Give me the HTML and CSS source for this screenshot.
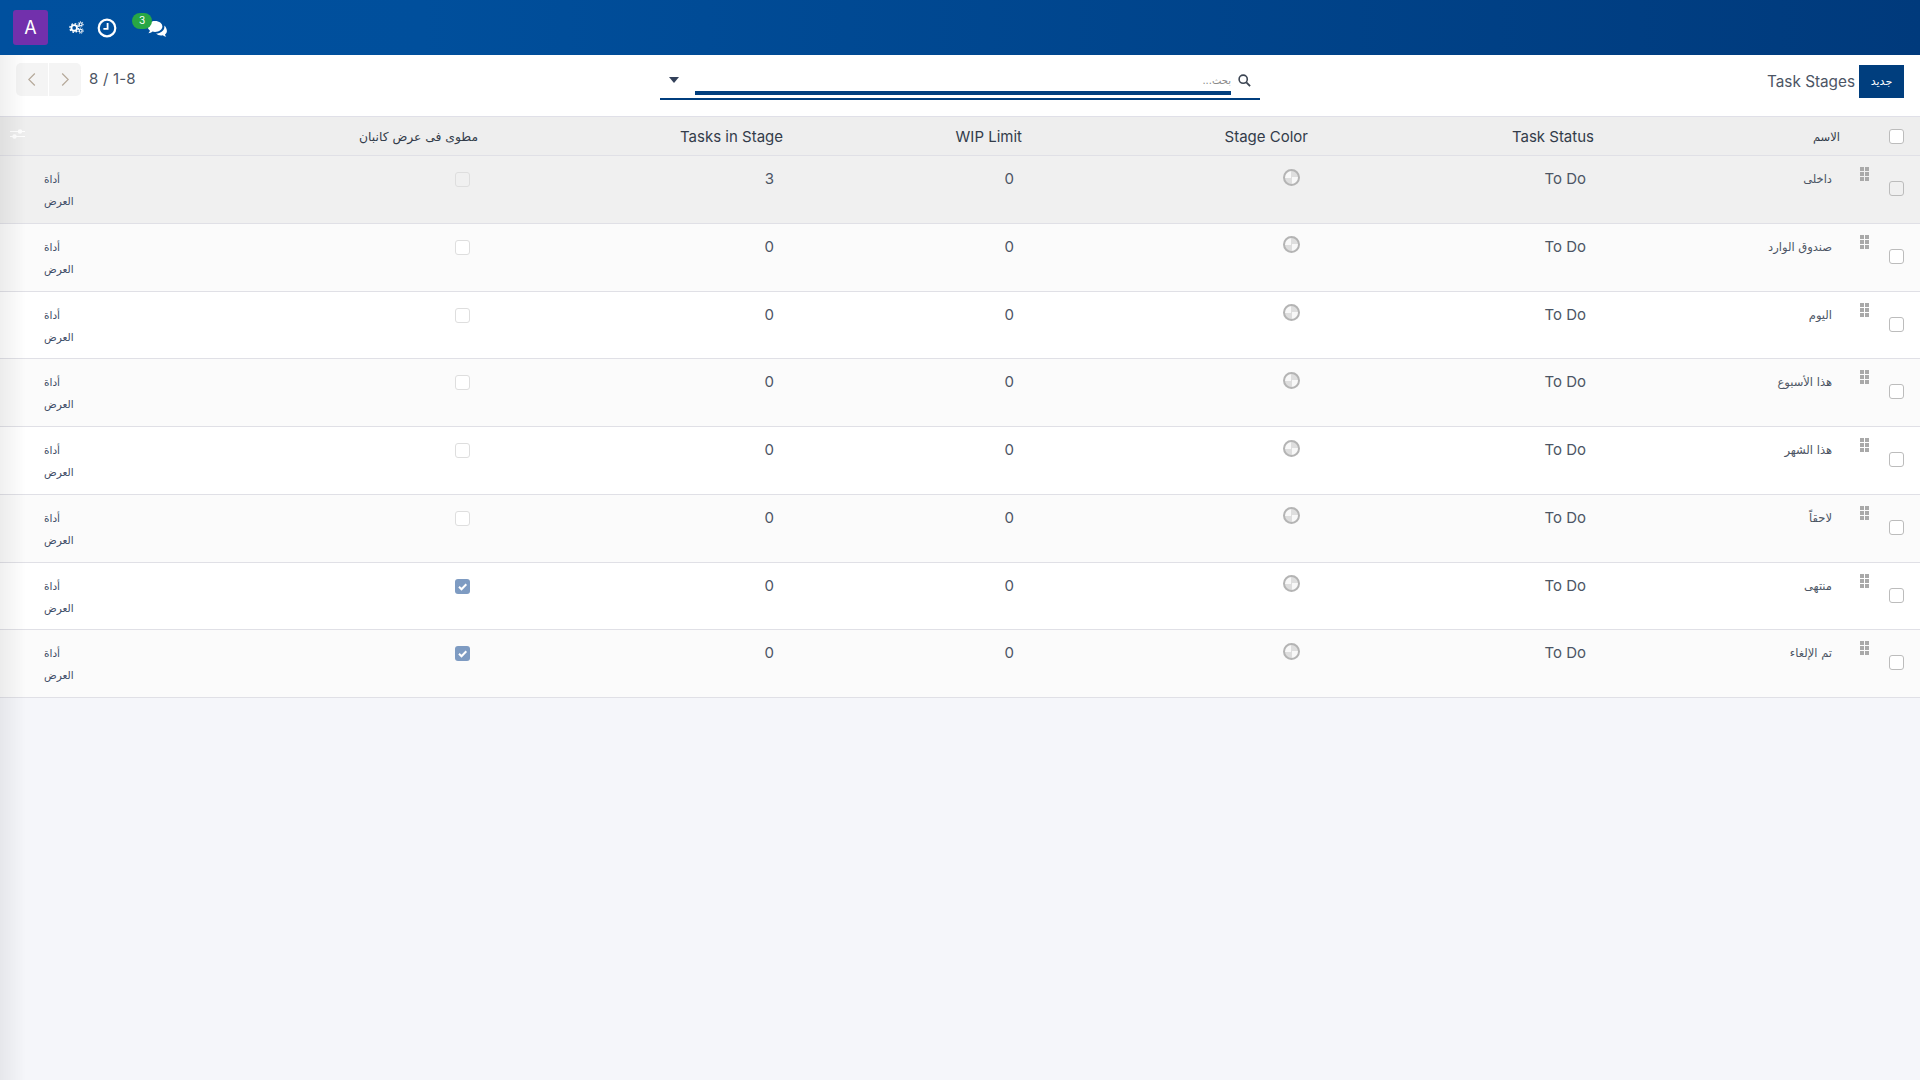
FILE: index.html
```html
<!DOCTYPE html>
<html lang="ar">
<head>
<meta charset="utf-8">
<title>Task Stages</title>
<link rel="stylesheet" href="styles.css">
</head>
<body>
<header class="topbar">
  <div class="avatar">A</div>
  <svg class="ico-gears" viewBox="0 0 16 14" width="15" height="13"><circle cx="5.5" cy="7.5" r="3" fill="none" stroke="#fff" stroke-width="2"/><circle cx="5.5" cy="7.5" r="4.6" fill="none" stroke="#fff" stroke-width="1.6" stroke-dasharray="1.8 1.8"/><circle cx="12.5" cy="3.5" r="1.6" fill="none" stroke="#fff" stroke-width="1.3"/><circle cx="12.5" cy="3.5" r="2.8" fill="none" stroke="#fff" stroke-width="1" stroke-dasharray="1.2 1.2"/><circle cx="12.5" cy="10.5" r="1.6" fill="none" stroke="#fff" stroke-width="1.3"/><circle cx="12.5" cy="10.5" r="2.8" fill="none" stroke="#fff" stroke-width="1" stroke-dasharray="1.2 1.2"/></svg>
  <svg class="ico-clock" viewBox="0 0 20 20" width="20" height="20"><circle cx="10" cy="10" r="8.3" fill="none" stroke="#fff" stroke-width="2.2"/><path d="M10.6 5v5.8H6.4" fill="none" stroke="#fff" stroke-width="1.8"/></svg>
  <div class="chat">
    <svg class="ico-chat" viewBox="0 0 21 18" width="21" height="18"><path d="M8 1C3.800 1 .6 3.400.6 6.600c0 1.700 1 3.200 2.400 4.200-.3 1-.9 1.800-1.600 2.500 1.500-.1 3-.8 4.100-1.700.8.2 1.600.3 2.500.3 4.200 0 7.400-2.400 7.400-5.300C15.400 3.400 12.200 1 8 1z" fill="#fff"/><path d="M17.300 5.500c.1.400.1.800.1 1.200 0 3.800-3.700 6.600-8.300 6.900 1.100 1.200 2.900 1.900 4.900 1.900.6 0 1.200-.1 1.800-.2.900.8 2.200 1.300 3.500 1.400-.6-.6-1.100-1.300-1.300-2.100 1.200-.9 1.900-2.100 1.900-3.500 0-2.300-1.100-4.400-2.600-5.600z" fill="#fff"/></svg>
    <span class="badge">3</span>
  </div>
</header>

<section class="panel">
  <div class="panel-start">
    <button class="btn-new" type="button">جديد</button>
    <span class="crumb">Task Stages</span>
  </div>
  <div class="search">
    <svg class="ico-search" viewBox="0 0 14 14" width="13" height="13"><circle cx="5.600" cy="5.600" r="4.400" fill="none" stroke="#3b4452" stroke-width="1.700"/><path d="M9 9l4 4" stroke="#3b4452" stroke-width="2"/></svg>
    <div class="search-field"><span class="placeholder">بحث...</span></div>
    <svg class="ico-caret" viewBox="0 0 10 6" width="10" height="6"><path d="M0 0h10L5 6z" fill="#33415a"/></svg>
  </div>
  <div class="panel-end">
    <span class="pager-text" dir="ltr">8 / 1-8</span>
    <div class="pager">
      <span class="pager-btn"><svg viewBox="0 0 10 18" width="8" height="15"><path d="M1.500 1.500l7.500 7.500-7.500 7.500" fill="none" stroke="#b5a99a" stroke-width="1.500"/></svg></span>
      <span class="pager-btn"><svg viewBox="0 0 10 18" width="8" height="15"><path d="M8.500 1.500L1 9l7.500 7.500" fill="none" stroke="#b5a99a" stroke-width="1.500"/></svg></span>
    </div>
  </div>
</section>

<table class="stages">
  <colgroup>
    <col class="c-sel"><col class="c-drag"><col class="c-name"><col class="c-status"><col class="c-color"><col class="c-wip"><col class="c-tasks"><col class="c-fold"><col class="c-tool">
  </colgroup>
  <thead>
    <tr>
      <th colspan="2" class="sel-head"><span class="cb"></span></th>
      <th class="th-ar th-name">الاسم</th>
      <th>Task Status</th>
      <th>Stage Color</th>
      <th>WIP Limit</th>
      <th>Tasks in Stage</th>
      <th class="th-ar">مطوى فى عرض كانبان</th>
      <th class="tool-head"><svg viewBox="0 0 15 10" width="15" height="10"><path d="M0 2.500h15M0 7.500h15" stroke="#fff" stroke-width="1.200"/><circle cx="10" cy="2.500" r="2.200" fill="#fff"/><circle cx="4.500" cy="7.500" r="2.200" fill="#fff"/></svg></th>
    </tr>
  </thead>
  <tbody id="rows"></tbody>
</table>
<div class="edge-shade"></div>
<script src="app.js"></script>
</body>
</html>
```
FILE: app.js
```js
var names = ["داخلى","صندوق الوارد","اليوم","هذا الأسبوع","هذا الشهر","لاحقاً","منتهى","تم الإلغاء"];
var tasks = [3,0,0,0,0,0,0,0];
var folded = [0,0,0,0,0,0,1,1];
var check = '<svg viewBox="0 0 15 15" width="15" height="15"><path d="M4 7.800l2.500 2.500 4.800-5" fill="none" stroke="#fff" stroke-width="2"/></svg>';
var dots = '<span class="drag"><i></i><i></i><i></i><i></i><i></i><i></i></span>';
document.getElementById("rows").innerHTML = names.map(function (n, i) {
  return '<tr class="' + (i === 0 ? "is-hover" : "") + '">' +
    '<td class="td-sel"><span class="cb"></span></td>' +
    '<td class="td-drag">' + dots + '</td>' +
    '<td class="td-name">' + n + '</td>' +
    '<td>To Do</td>' +
    '<td class="td-color"><span class="swatch"></span></td>' +
    '<td>0</td>' +
    '<td class="td-tasks">' + tasks[i] + '</td>' +
    '<td class="td-fold">' + (folded[i] ? '<span class="cb2 on">' + check + '</span>' : '<span class="cb2"></span>') + '</td>' +
    '<td class="td-tool">أداة العرض</td>' +
    '</tr>';
}).join("");
```
FILE: styles.css
```css
* { box-sizing: border-box; }
html, body { height: 100%; }
body {
  margin: 0;
  background: #f5f6fa;
  font-family: "Inter", "DejaVu Sans", sans-serif;
  font-size: 14px;
  color: #4c5564;
  overflow: hidden;
}
.topbar {
  height: 55px;
  background: linear-gradient(90deg, #00509e 0%, #004f9c 22%, #003a7c 100%);
  display: flex;
  align-items: center;
  padding-left: 13px;
}
.avatar {
  width: 35px;
  height: 35px;
  border-radius: 3px;
  background: #7230ac;
  color: #fff;
  font-size: 18px;
  display: flex;
  align-items: center;
  justify-content: center;
}
.ico-gears { margin-left: 21px; }
.ico-clock { margin-left: 13px; }
.chat { position: relative; margin-left: 30px; width: 21px; height: 18px; top: 1px; }
.ico-chat { display: block; }
.badge {
  position: absolute;
  left: -15px;
  top: -7px;
  width: 20px;
  height: 16px;
  border-radius: 8px;
  background: #28a745;
  color: #fff;
  font-size: 10px;
  line-height: 15px;
  text-align: center;
}
.panel {
  height: 62px;
  background: #fff;
  border-bottom: 1px solid #e0e0e8;
  display: grid;
  grid-template-columns: 1fr 600px 1fr;
  direction: rtl;
  padding: 10px 16px 0;
}
.panel-start { display: flex; align-items: flex-start; gap: 4px; }
.btn-new {
  width: 45px;
  height: 33px;
  border: 0;
  background: #003e7e;
  color: #fff;
  font-family: "DejaVu Sans", sans-serif;
  font-size: 11px;
  padding: 0;
}
.crumb { font-size: 15.300px; line-height: 33px; color: #4c5564; }
.search {
  height: 36px;
  border-bottom: 2px solid #003e7e;
  display: flex;
  align-items: flex-start;
  padding-right: 9px;
  margin-top: -1px;
}
.ico-search { margin-top: 10px; flex: none; }
.search-field {
  width: 536px;
  height: 31px;
  margin-right: 7px;
  border-bottom: 4px solid #003e7e;
  padding-top: 10px;
}
.placeholder { font-family: "DejaVu Sans", sans-serif; font-size: 10px; color: #8a8a8a; display: block; line-height: 14px; }
.ico-caret { margin: 13px 16px 0 0; }
.panel-end { display: flex; justify-content: flex-end; align-items: flex-start; gap: 8px; margin-top: -2px; }
.pager-text { font-size: 15px; letter-spacing: .2px; line-height: 32px; color: #4c5564; }
.pager { display: flex; gap: 1px; }
.pager-btn {
  width: 32px;
  height: 33px;
  background: #f4f4f4;
  display: flex;
  align-items: center;
  justify-content: center;
}
.pager-btn:first-child { border-radius: 0 5px 5px 0; }
.pager-btn:last-child { border-radius: 5px 0 0 5px; }

.stages {
  width: 1920px;
  table-layout: fixed;
  border-collapse: separate;
  border-spacing: 0;
  direction: rtl;
}
.c-sel { width: 40px; }
.c-drag { width: 32px; }
.c-name { width: 247px; }
.c-status { width: 286px; }
.c-color { width: 286px; }
.c-wip { width: 239px; }
.c-tasks { width: 304px; }
.c-fold { width: 403px; }
.c-tool { width: 83px; }
th {
  height: 39px;
  padding: 1px 7px 0;
  background: #eee;
  border-bottom: 1px solid #e0e0e6;
  font-weight: 400;
  font-size: 15px;
  color: #333c4a;
  text-align: right;
  white-space: nowrap;
}
.th-ar { font-family: "DejaVu Sans", sans-serif; font-size: 12.300px; padding-right: 8px; }
.th-name { font-size: 11.500px; }
.sel-head { padding: 1px 16px 0 0; }
.tool-head { padding: 0 0 5px 0; }
.tool-head svg { display: block; margin-left: 10px; margin-right: auto; }
td {
  height: 67.750px;
  padding: 12px 15px 0 0;
  vertical-align: top;
  border-bottom: 1px solid #e0e0e6;
  font-size: 15px;
  line-height: 22px;
  text-align: right;
  background: #fff;
}
tbody tr:nth-child(even) td { background: #fbfbfb; }
tbody tr.is-hover td { background: #f0f0f0; }
.td-sel { padding: 25px 16px 0 0; }
.td-drag { padding: 11px 11px 0 0; }
.td-name { font-family: "DejaVu Sans", sans-serif; font-size: 11.500px; padding-right: 16px; }
.td-tasks { padding-right: 16px; }
.td-color { padding-top: 12.500px; }
.td-fold { padding-top: 16px; padding-right: 16px; }
.td-tool {
  font-family: "DejaVu Sans", sans-serif;
  font-size: 10.500px;
  padding: 12px 8px 0 0;
  text-align: left;
  padding-left: 44px;
  color: #3d4c66;
}
.cb, .cb2 { display: block; width: 15px; height: 15px; border-radius: 3px; }
.cb { border: 1.500px solid #bcbcbc; background: #fff; }
.cb2 { border: 1.500px solid #dedede; background: #fff; }
.cb2.on { border: 0; background: #7e9bc2; }
.cb2 svg { display: block; }
tbody tr.is-hover .cb { background: transparent; }
tbody tr.is-hover .cb2 { background: transparent; }
.drag { display: grid; grid-template-columns: 4px 4px; gap: 1px 1px; width: 10px; }
.drag i { display: block; width: 4px; height: 4px; background: #a9a9a9; }
.swatch {
  display: block;
  width: 17px;
  height: 17px;
  border-radius: 50%;
  border: 2px solid #b4b4b4;
  background: conic-gradient(#dedede 25%, #f8f8f8 0 50%, #dedede 0 75%, #f8f8f8 0);
}
.edge-shade {
  position: fixed;
  left: 0;
  top: 55px;
  bottom: 0;
  width: 26px;
  pointer-events: none;
  background: linear-gradient(90deg, rgba(0,0,0,.06), rgba(0,0,0,0));
}
```
